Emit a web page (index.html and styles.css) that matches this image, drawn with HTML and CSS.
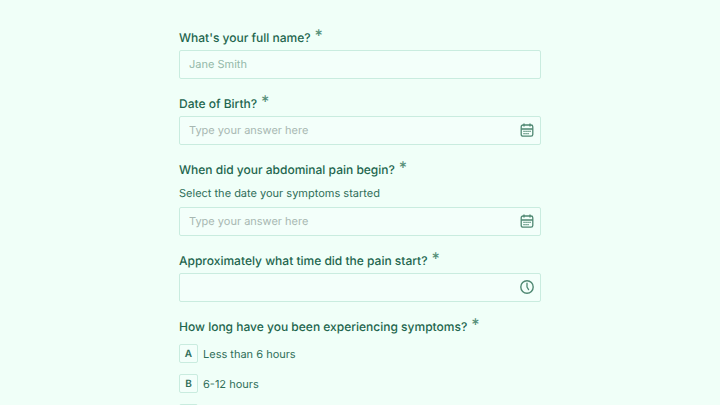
FILE: index.html
```
<!DOCTYPE html>
<html lang="en">
<head>
<meta charset="utf-8">
<meta name="viewport" content="width=device-width, initial-scale=1">
<title>Symptom form</title>
<link rel="stylesheet" href="styles.css">
</head>
<body>
<svg class="sprite" aria-hidden="true">
  <symbol id="calendar" viewBox="0 0 14 14">
    <rect x="1.2" y="2" width="11.6" height="11.2" rx="1.8" fill="none" stroke="currentColor" stroke-width="1.3"/>
    <path d="M1.2 6h11.6M4 .4v3.2M10 .4v3.2" fill="none" stroke="currentColor" stroke-width="1.3"/>
    <path d="M3.4 8.4h7.4M3.4 10.7h5.4" fill="none" stroke="currentColor" stroke-width="1.2" stroke-dasharray="1.3 .7"/>
  </symbol>
  <symbol id="clock" viewBox="0 0 14 14">
    <circle cx="7" cy="7" r="6.2" fill="none" stroke="currentColor" stroke-width="1.4"/>
    <path d="M7 3.2V7l1.6 2.6" fill="none" stroke="currentColor" stroke-width="1.3" stroke-linecap="round" stroke-linejoin="round"/>
  </symbol>
</svg>
<form class="form">
  <div class="field">
    <label class="question" for="name">What's your full name?<span class="required">*</span></label>
    <div class="control"><input class="example" id="name" type="text" placeholder="Jane Smith" required></div>
  </div>
  <div class="field">
    <label class="question" for="birth">Date of Birth?<span class="required">*</span></label>
    <div class="control"><input id="birth" type="text" placeholder="Type your answer here" required><svg class="icon" aria-hidden="true"><use href="#calendar"/></svg></div>
  </div>
  <div class="field">
    <label class="question" for="onset">When did your abdominal pain begin?<span class="required">*</span></label>
    <p class="hint" id="onset-hint">Select the date your symptoms started</p>
    <div class="control"><input id="onset" type="text" placeholder="Type your answer here" aria-describedby="onset-hint" required><svg class="icon" aria-hidden="true"><use href="#calendar"/></svg></div>
  </div>
  <div class="field">
    <label class="question" for="time">Approximately what time did the pain start?<span class="required">*</span></label>
    <div class="control"><input id="time" type="text" required><svg class="icon" aria-hidden="true"><use href="#clock"/></svg></div>
  </div>
  <fieldset class="field">
    <legend class="question">How long have you been experiencing symptoms?<span class="required">*</span></legend>
    <div class="options">
      <label class="option"><input type="radio" name="duration" value="a"><span class="key">A</span>Less than 6 hours</label>
      <label class="option"><input type="radio" name="duration" value="b"><span class="key">B</span>6-12 hours</label>
      <label class="option"><input type="radio" name="duration" value="c" aria-label="Over 12 hours"><span class="key"></span></label>
    </div>
  </fieldset>
</form>
</body>
</html>
```
FILE: styles.css
```
* {
  box-sizing: border-box;
}

html {
  height: 100%;
  overflow: hidden;
}

body {
  height: 100%;
  margin: 0;
  overflow: hidden;
  background: #f0fff8;
  color: #2f6e58;
  font: 11px/18px Inter, sans-serif;
  text-rendering: geometricPrecision;
}

.sprite {
  display: none;
}

.form {
  display: flex;
  flex-direction: column;
  gap: 15px;
  max-width: 362px;
  margin: 0 auto;
  padding-top: 28px;
}

.field {
  min-width: 0;
  margin: 0;
  padding: 0;
  border: 0;
}

.question {
  display: block;
  padding: 0 0 2px;
  color: #22654d;
  font-size: 12px;
  font-weight: 500;
  line-height: 20px;
}

.required {
  position: relative;
  top: -1px;
  margin-left: 4px;
  color: #568f78;
  font-size: 16px;
  line-height: 1px;
}

.hint {
  margin: 2px 0 5px;
}

.control {
  position: relative;
}

.control input {
  display: block;
  width: 100%;
  height: 29px;
  padding: 0 30px 2px 9px;
  border: 1px solid #c9ecdf;
  border-radius: 2px;
  outline: 0;
  background: #f3fffa;
  color: inherit;
  font: inherit;
  text-rendering: inherit;
}

.control input::placeholder {
  color: #a8b8b2;
  opacity: 1;
}

.control .example::placeholder {
  color: #93b9a9;
}

.icon {
  position: absolute;
  top: 7px;
  right: 7px;
  width: 14px;
  height: 14px;
  color: #4f8872;
}

.options {
  display: grid;
  gap: 11px;
  margin-top: 5px;
}

.option {
  position: relative;
  display: flex;
  align-items: center;
  gap: 5px;
}

.option input {
  position: absolute;
  opacity: 0;
}

.key {
  display: grid;
  place-items: center;
  width: 19px;
  height: 19px;
  border: 1px solid #c9ecdf;
  border-radius: 2px;
  background: #f3fffa;
  font-size: 10px;
  font-weight: 600;
}
```
